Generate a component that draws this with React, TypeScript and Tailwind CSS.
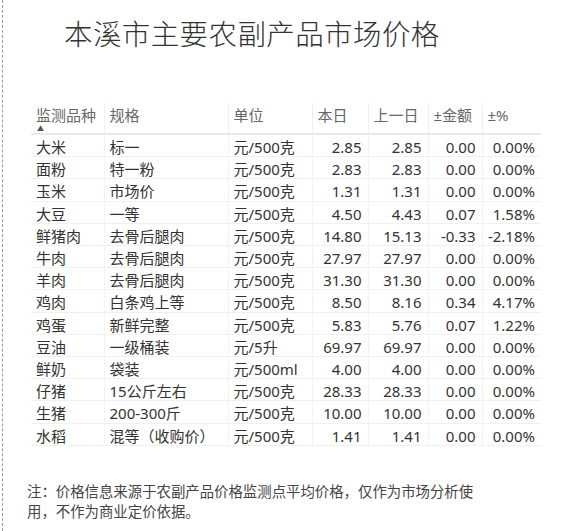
import React from 'react';

const rows = [
  ['大米', '标一', '元/500克', '2.85', '2.85', '0.00', '0.00%'],
  ['面粉', '特一粉', '元/500克', '2.83', '2.83', '0.00', '0.00%'],
  ['玉米', '市场价', '元/500克', '1.31', '1.31', '0.00', '0.00%'],
  ['大豆', '一等', '元/500克', '4.50', '4.43', '0.07', '1.58%'],
  ['鲜猪肉', '去骨后腿肉', '元/500克', '14.80', '15.13', '-0.33', '-2.18%'],
  ['牛肉', '去骨后腿肉', '元/500克', '27.97', '27.97', '0.00', '0.00%'],
  ['羊肉', '去骨后腿肉', '元/500克', '31.30', '31.30', '0.00', '0.00%'],
  ['鸡肉', '白条鸡上等', '元/500克', '8.50', '8.16', '0.34', '4.17%'],
  ['鸡蛋', '新鲜完整', '元/500克', '5.83', '5.76', '0.07', '1.22%'],
  ['豆油', '一级桶装', '元/5升', '69.97', '69.97', '0.00', '0.00%'],
  ['鲜奶', '袋装', '元/500ml', '4.00', '4.00', '0.00', '0.00%'],
  ['仔猪', '15公斤左右', '元/500克', '28.33', '28.33', '0.00', '0.00%'],
  ['生猪', '200-300斤', '元/500克', '10.00', '10.00', '0.00', '0.00%'],
  ['水稻', '混等（收购价）', '元/500克', '1.41', '1.41', '0.00', '0.00%'],
];

const widths = ['w-[73px]', 'w-[124px]', 'w-[84px]', 'w-[56px]', 'w-[60px]', 'w-[54px]', 'w-[59px]'];
const heads = ['监测品种', '规格', '单位', '本日', '上一日', '±金额', '±%'];

export default function App() {
  return (
    <div
      className="w-[576px] h-[531px] bg-white overflow-hidden relative"
      style={{ fontFamily: '"Noto Sans", "Noto Sans CJK SC", sans-serif' }}
    >
      {/* dashed edge */}
      <div className="absolute left-[2px] top-0 bottom-0 border-l border-dashed border-[#9a9a9a]" />

      {/* Title */}
      <h1
        className="pl-[64px] pt-[13px] h-[103px] text-[28.5px] font-extralight text-[#333] tracking-[0.4px] leading-[40px]"
        style={{ fontFamily: '"Noto Sans CJK SC Light", "Noto Sans CJK SC", sans-serif' }}
      >
        本溪市主要农副产品市场价格
      </h1>

      {/* Table */}
      <table className="ml-[31px] border-collapse table-fixed text-[15px] leading-[18.2px] text-[#333]">
        <thead>
          <tr className="border-b-2 border-[#e8e8e8]">
            {heads.map((h, i) => (
              <th
                key={h}
                className={`${widths[i]} h-[31px] align-top text-left font-normal text-[#666] px-[5px] pt-[1px] ${i > 0 ? 'border-l border-[#eeeeee]' : ''} ${i >= 5 ? 'px-[3px]' : ''}`}
              >
                <div className="leading-[22px] whitespace-nowrap">{h}</div>
                {i === 0 && <div className="text-[7px] leading-[6px] text-[#555] pl-[1px]">▲</div>}
              </th>
            ))}
          </tr>
        </thead>
        <tbody>
          {rows.map((r) => (
            <tr key={r[0]} className="border-b border-[#f0f0f0]">
              {r.map((c, i) => (
                <td
                  key={i}
                  className={`${widths[i]} whitespace-nowrap pt-[3px] pb-0 ${i > 0 ? 'border-l border-[#f2f2f2]' : ''} ${i >= 3 ? 'text-right pr-[6px]' : 'pl-[5px]'} ${i === 6 ? 'pr-[4px]' : ''}`}
                >
                  {c}
                </td>
              ))}
            </tr>
          ))}
        </tbody>
      </table>

      {/* Note */}
      <p className="pl-[27px] pr-[90px] pt-[36px] text-[14.4px] leading-[20px] text-[#444]">
        注：价格信息来源于农副产品价格监测点平均价格，仅作为市场分析使用，不作为商业定价依据。
      </p>
    </div>
  );
}
